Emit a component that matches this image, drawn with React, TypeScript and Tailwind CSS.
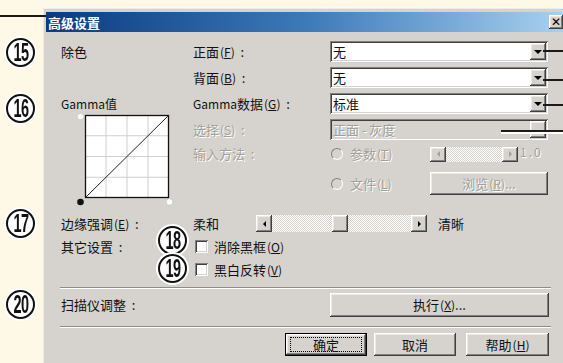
import React from 'react'

const raised =
  'bg-[#d6d3ce] shadow-[inset_-1px_-1px_#404040,inset_1px_1px_#ffffff,inset_-2px_-2px_#808080,inset_2px_2px_#ece9e4]'
const sunken =
  'shadow-[inset_1px_1px_#808080,inset_-1px_-1px_#ffffff,inset_2px_2px_#404040,inset_-2px_-2px_#d6d3ce]'
const dim = 'text-[#a29f9a] [text-shadow:1px_1px_0_#ffffff]'
const dither = 'bg-[repeating-conic-gradient(#d6d3ce_0_25%,#ffffff_0_50%)] bg-[length:2px_2px]'

function Key({ k }: { k: string }) {
  return (
    <span className="text-[12px] ml-[1px]">
      (<span className="underline underline-offset-1">{k}</span>)
    </span>
  )
}

function ArrowBox({ empty }: { empty?: boolean }) {
  return (
    <div className={`w-[16px] h-full flex items-center justify-center ${raised}`}>
      {!empty && (
        <div className="w-0 h-0 border-l-[4px] border-r-[4px] border-t-[4px] border-l-transparent border-r-transparent border-t-black" />
      )}
    </div>
  )
}

function Combo({ value, disabled }: { value: string; disabled?: boolean }) {
  return (
    <div
      className={`h-[21px] w-[218px] flex p-[2px] ${sunken} ${disabled ? 'bg-[#d6d3ce]' : 'bg-white'}`}
    >
      <span className={`flex-1 pl-[1px] leading-[17px] ${disabled ? dim : ''}`}>{value}</span>
      <ArrowBox empty={disabled} />
    </div>
  )
}

function SmallArrow({ dir, disabled }: { dir: 'l' | 'r'; disabled?: boolean }) {
  const c = disabled ? 'border-l-[#a29f9a]' : 'border-l-black'
  const cr = disabled ? 'border-r-[#a29f9a]' : 'border-r-black'
  return (
    <div className={`w-[16px] h-full flex items-center justify-center ${raised}`}>
      {dir === 'l' ? (
        <div className={`w-0 h-0 border-t-[3px] border-b-[3px] border-r-[3px] border-t-transparent border-b-transparent ${cr}`} />
      ) : (
        <div className={`w-0 h-0 border-t-[3px] border-b-[3px] border-l-[3px] border-t-transparent border-b-transparent ${c}`} />
      )}
    </div>
  )
}

function Radio({ label, k }: { label: string; k: string }) {
  return (
    <div className={`flex items-center gap-[7px] ${dim}`}>
      <div className="w-[12px] h-[12px] rounded-full border border-t-[#808080] border-l-[#808080] border-b-white border-r-white bg-[#d6d3ce]" />
      <span>
        {label}
        <Key k={k} />
      </span>
    </div>
  )
}

function Check({ label, k }: { label: string; k: string }) {
  return (
    <div className="flex items-center gap-[6px] h-[13px] ml-[2px]">
      <div className={`w-[13px] h-[13px] bg-white ${sunken}`} />
      <span>
        {label}
        <Key k={k} />
      </span>
    </div>
  )
}

function Btn({ children, w, def, disabled }: { children: React.ReactNode; w: string; def?: boolean; disabled?: boolean }) {
  return (
    <div className={`${w} h-[23px] flex ${def ? 'border border-black' : ''}`}>
      <div className={`flex-1 flex items-center justify-center ${raised}`}>
        <div
          className={`flex items-center justify-center ${def ? 'border border-dotted border-black w-[calc(100%-8px)] h-[15px]' : ''} ${disabled ? dim : ''}`}
        >
          {children}
        </div>
      </div>
    </div>
  )
}

function Gamma() {
  const x0 = 9
  const y0 = 3
  const w = 84
  const h = 83
  const lines = [1, 2, 3]
  return (
    <svg width="100" height="94" className="ml-[15px] -mt-[2px] block">
      <rect x={x0} y={y0} width={w} height={h} fill="#ffffff" />
      {lines.map(i => (
        <g key={i}>
          <line x1={x0 + (w * i) / 4} y1={y0} x2={x0 + (w * i) / 4} y2={y0 + h} stroke="#cfcfcf" strokeWidth="1" />
          <line x1={x0} y1={y0 + (h * i) / 4} x2={x0 + w} y2={y0 + (h * i) / 4} stroke="#cfcfcf" strokeWidth="1" />
        </g>
      ))}
      <rect x={x0 + 0.5} y={y0 + 0.5} width={w - 1} height={h - 1} fill="none" stroke="#111" strokeWidth="1.3" />
      <line x1={x0} y1={y0 + h} x2={x0 + w} y2={y0} stroke="#222" strokeWidth="1" />
      <circle cx="4.5" cy="4.5" r="3.3" fill="#ffffff" stroke="#bbb" strokeWidth="0.6" />
      <circle cx="4.5" cy="90" r="3.3" fill="#111" />
      <circle cx="93.5" cy="90" r="3.3" fill="#ffffff" stroke="#bbb" strokeWidth="0.6" />
    </svg>
  )
}

function Num({ n, cls }: { n: number; cls: string }) {
  return (
    <div
      className={`absolute w-[29px] h-[29px] rounded-full bg-white border-2 border-[#111] flex items-center justify-center shadow-[0_0_0_2px_#ffffff] ${cls}`}
    >
      <span className="font-['Liberation_Sans',sans-serif] font-bold text-[25px] leading-none scale-x-[0.58] tracking-[-1px] text-[#111]">
        {n}
      </span>
    </div>
  )
}

export default function App() {
  return (
    <div className="relative w-[563px] h-[363px] overflow-hidden bg-[#fdf9e6] pt-[8px] pl-[43px] text-[13px] text-[#111] font-['Noto_Sans_CJK_SC','Noto_Sans',sans-serif]">
      {/* 对话框 */}
      <div className="w-[524px] h-[360px] bg-[#d6d3ce] border-l border-t border-[#eeece8] pl-[2px] pt-[3px]">
        {/* 标题栏 */}
        <div className="h-[20px] flex items-center justify-between pl-[2px] pr-[4px] bg-gradient-to-r from-[#0a3a80] via-[#3d7ab8] to-[#a9d2f0]">
          <span className="text-white font-bold text-[13px] leading-none">高级设置</span>
          <div className={`w-[14px] h-[14px] flex items-center justify-center ${raised}`}>
            <span className="font-['DejaVu_Sans',sans-serif] font-bold text-[12px] leading-none text-black">✕</span>
          </div>
        </div>

        <div className="pl-[15px] pt-[9px]">
          {/* 除色 / Gamma */}
          <div className="flex">
            <div className="w-[132px] flex flex-col">
              <div className="h-[21px] flex items-center">除色</div>
              <div className="h-[21px] mt-[5px]" />
              <div className="h-[21px] mt-[5px] flex items-center text-[12px]">Gamma值</div>
              <Gamma />
            </div>
            <div className="grid grid-cols-[137px_218px] auto-rows-min">
              <div className="h-[21px] flex items-center">
                正面<Key k="F" />&nbsp;&nbsp;:
              </div>
              <Combo value="无" />
              <div className="h-[21px] mt-[5px] flex items-center">
                背面<Key k="B" />&nbsp;&nbsp;:
              </div>
              <div className="mt-[5px]">
                <Combo value="无" />
              </div>
              <div className="h-[21px] mt-[5px] flex items-center">
                <span className="text-[12px]">Gamma</span>数据<Key k="G" />&nbsp;&nbsp;:
              </div>
              <div className="mt-[5px]">
                <Combo value="标准" />
              </div>
              <div className={`h-[21px] mt-[5px] flex items-center ${dim}`}>
                选择<Key k="S" />&nbsp;&nbsp;:
              </div>
              <div className="mt-[5px]">
                <Combo value="正面 - 灰度" disabled />
              </div>
              <div className={`h-[20px] mt-[4px] flex items-center ${dim}`}>输入方法&nbsp;&nbsp;:</div>
              <div className="h-[20px] mt-[4px] flex items-center">
                <div className="w-[100px] pl-[1px]">
                  <Radio label="参数" k="T" />
                </div>
                <div className="w-[88px] h-[15px] flex">
                  <SmallArrow dir="l" disabled />
                  <div className={`flex-1 ${dither}`} />
                  <SmallArrow dir="r" disabled />
                </div>
                <span className={`ml-[2px] text-[12px] tracking-[2px] -mt-[4px] ${dim}`}>1.0</span>
              </div>
              <div className="h-[23px] mt-[8px]" />
              <div className="h-[23px] mt-[8px] flex items-center">
                <div className="w-[100px] pl-[1px]">
                  <Radio label="文件" k="L" />
                </div>
                <Btn w="w-[118px]" disabled>
                  浏览<Key k="R" />...
                </Btn>
              </div>
            </div>
          </div>

          {/* 边缘强调 */}
          <div className="flex items-center h-[17px] mt-[9px]">
            <div className="w-[132px]">
              边缘强调<Key k="E" />&nbsp;&nbsp;:
            </div>
            <div className="w-[63px]">柔和</div>
            <div className="w-[171px] h-[17px] flex">
              <SmallArrow dir="l" />
              <div className={`flex-1 flex ${dither}`}>
                <div className="w-[60px]" />
                <div className={`w-[16px] h-full ${raised}`} />
              </div>
              <SmallArrow dir="r" />
            </div>
            <div className="ml-[11px]">清晰</div>
          </div>

          {/* 其它设置 */}
          <div className="flex items-center h-[13px] mt-[8px]">
            <div className="w-[132px]">其它设置&nbsp;&nbsp;:</div>
            <Check label="消除黑框" k="O" />
          </div>
          <div className="flex items-center h-[13px] mt-[10px]">
            <div className="w-[132px]" />
            <Check label="黑白反转" k="V" />
          </div>

          <div className="w-[491px] -ml-[1px] mt-[11px] border-t border-b border-t-[#8f8c88] border-b-white" />

          {/* 扫描仪调整 */}
          <div className="flex items-center h-[24px] mt-[4px]">
            <div className="w-[269px]">扫描仪调整&nbsp;&nbsp;:</div>
            <Btn w="w-[219px] !h-[24px]">
              执行<Key k="X" />...
            </Btn>
          </div>

          <div className="w-[491px] -ml-[1px] mt-[9px] border-t border-b border-t-[#8f8c88] border-b-white" />

          {/* 按钮 */}
          <div className="flex mt-[5px] ml-[224px] gap-[7px]">
            <Btn w="w-[82px]" def>
              确定
            </Btn>
            <Btn w="w-[82px]">取消</Btn>
            <div className="ml-[3px]">
              <Btn w="w-[83px]">
                帮助<Key k="H" />
              </Btn>
            </div>
          </div>
        </div>
      </div>

      {/* 引线 */}
      <div className="absolute left-0 top-[15px] w-[46px] h-[2px] bg-[#1a1a1a]" />
      <div className="absolute left-[543px] top-[50px] w-[20px] h-[2px] bg-[#1a1a1a]" />
      <div className="absolute left-[543px] top-[79px] w-[20px] h-[2px] bg-[#1a1a1a]" />
      <div className="absolute left-[543px] top-[104px] w-[20px] h-[2px] bg-[#1a1a1a]" />
      <div className="absolute left-[501px] top-[130px] w-[62px] h-[2px] bg-[#1a1a1a] shadow-[0_2px_0_#ffffff]" />

      {/* 编号 */}
      <Num n={15} cls="left-[6px] top-[38px]" />
      <Num n={16} cls="left-[6px] top-[94px]" />
      <Num n={17} cls="left-[6px] top-[209px]" />
      <Num n={18} cls="left-[158px] top-[226px]" />
      <Num n={19} cls="left-[158px] top-[254px]" />
      <Num n={20} cls="left-[6px] top-[290px]" />
    </div>
  )
}
